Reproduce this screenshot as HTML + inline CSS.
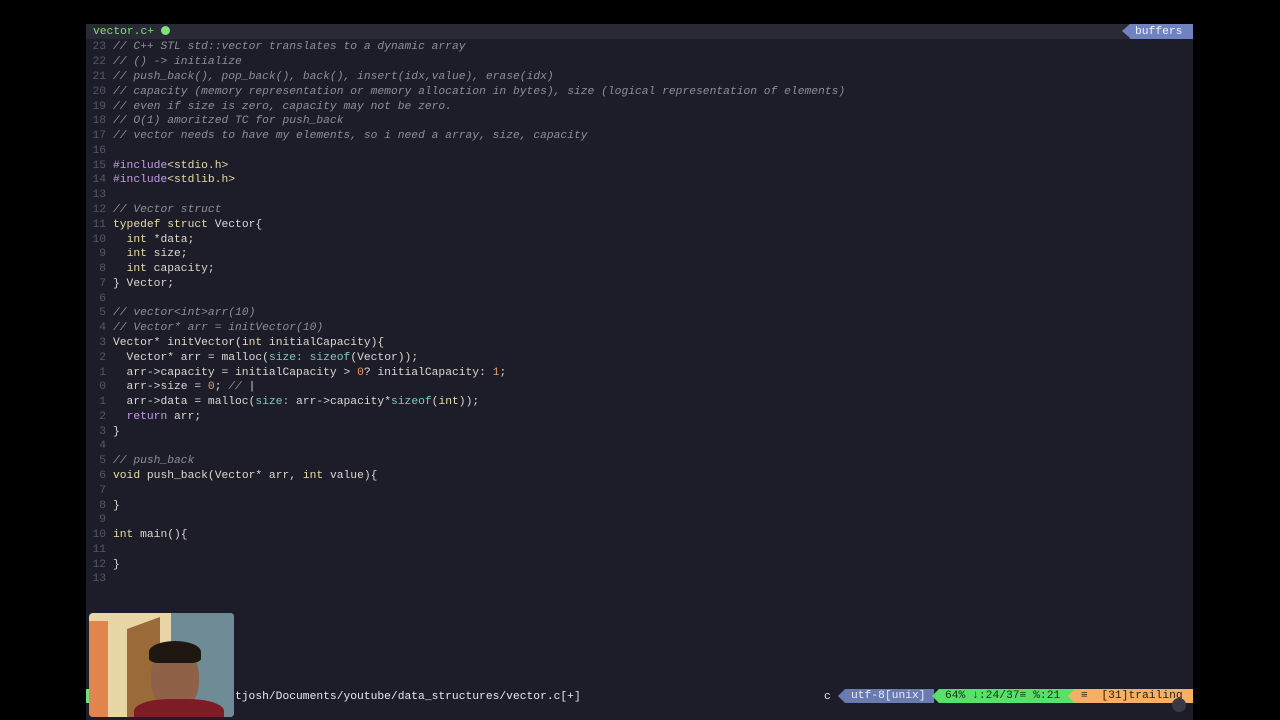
<!DOCTYPE html>
<html><head><meta charset="utf-8"><style>
html,body{margin:0;padding:0;background:#000;width:1280px;height:720px;overflow:hidden}
#ed{position:absolute;left:86px;top:24px;width:1107px;height:696px;background:#1d1d29}
#tab{position:absolute;left:86px;top:24px;width:1107px;height:15px;background:#2a2a37}
.m{font-family:"Liberation Mono",monospace;font-size:11.3px;white-space:pre;position:absolute;line-height:14.78px}
.ln{color:#545868;width:20px;text-align:right;left:86px}
.tx{left:113px;color:#dcd7cf}
.c{color:#8d8d9c;font-style:italic}
.k{color:#e8dba6}
.p{color:#c79be6}
.f{color:#7fc9c0}
.n{color:#e99a6a}
</style></head><body>
<div id="ed"></div>
<div id="tab"></div>
<div class="m" style="left:93px;top:25px;color:#7ee07a;line-height:15px">vector.c+ <span style="display:inline-block;width:9px;height:9px;border-radius:50%;background:#7ee07a;vertical-align:-1px"></span></div>
<div style="position:absolute;left:1122px;top:24px;width:0;height:0;border-top:7.5px solid transparent;border-bottom:7.5px solid transparent;border-right:8px solid #7083c0"></div>
<div class="m" style="left:1130px;top:24px;width:58px;height:15px;line-height:16px;background:#7083c0;color:#f0f0f8;padding-left:5px">buffers</div>
<div id="code"></div>
<div style="position:absolute;left:86px;top:689px;width:4px;height:14px;background:#6fe07a"></div>
<div class="m" style="left:235px;top:690px;line-height:14px;color:#e8e8ee">tjosh/Documents/youtube/data_structures/vector.c[+]</div>
<div class="m" style="left:824px;top:690px;line-height:14px;color:#e8e8ee">c</div>
<div style="position:absolute;left:838px;top:689px;border-top:7px solid transparent;border-bottom:7px solid transparent;border-right:7px solid #6a7bb0"></div>
<div class="m" style="left:845px;top:689px;width:83px;height:14px;line-height:15px;background:#6a7bb0;color:#e8ecf8;padding-left:6px">utf-8[unix]</div>
<div style="position:absolute;left:932px;top:689px;border-top:7px solid transparent;border-bottom:7px solid transparent;border-right:7px solid #58e06a"></div>
<div class="m" style="left:939px;top:689px;width:131px;height:14px;line-height:15px;background:#58e06a;color:#15301a;padding-left:6px">64% ↓:24/37≡ %:21</div>
<div style="position:absolute;left:1068px;top:689px;border-top:7px solid transparent;border-bottom:7px solid transparent;border-right:7px solid #f5b065"></div>
<div class="m" style="left:1075px;top:689px;width:112px;height:14px;line-height:15px;background:#f5b065;color:#2a2010;padding-left:6px">≡  [31]trailing</div>
<div style="position:absolute;left:1172px;top:698px;width:14px;height:14px;border-radius:50%;background:#3a3a44"></div>
<div style="position:absolute;left:89px;top:613px;width:145px;height:104px;border-radius:4px;overflow:hidden;background:#e9d6a6">
 <div style="position:absolute;left:0;top:8px;width:19px;height:96px;background:#e0854e"></div>
 <div style="position:absolute;left:38px;top:10px;width:33px;height:94px;background:#9a6a38;transform:skewY(-20deg)"></div>
 <div style="position:absolute;left:82px;top:0;width:63px;height:104px;background:#6f8c96"></div>
 <div style="position:absolute;left:62px;top:35px;width:48px;height:62px;border-radius:45%;background:#8e6148"></div>
 <div style="position:absolute;left:60px;top:28px;width:52px;height:22px;border-radius:50% 50% 20% 20%;background:#1e1712"></div>
 <div style="position:absolute;left:45px;top:86px;width:90px;height:30px;border-radius:40% 40% 0 0;background:#7e1c26"></div>
</div>
<script>
const L=[
["23",'<span class="c">// C++ STL std::vector translates to a dynamic array</span>'],
["22",'<span class="c">// () -> initialize</span>'],
["21",'<span class="c">// push_back(), pop_back(), back(), insert(idx,value), erase(idx)</span>'],
["20",'<span class="c">// capacity (memory representation or memory allocation in bytes), size (logical representation of elements)</span>'],
["19",'<span class="c">// even if size is zero, capacity may not be zero.</span>'],
["18",'<span class="c">// O(1) amoritzed TC for push_back</span>'],
["17",'<span class="c">// vector needs to have my elements, so i need a array, size, capacity</span>'],
["16",''],
["15",'<span class="p">#include</span><span class="k">&lt;stdio.h&gt;</span>'],
["14",'<span class="p">#include</span><span class="k">&lt;stdlib.h&gt;</span>'],
["13",''],
["12",'<span class="c">// Vector struct</span>'],
["11",'<span class="k">typedef struct</span> Vector{'],
["10",'  <span class="k">int</span> *data;'],
["9",'  <span class="k">int</span> size;'],
["8",'  <span class="k">int</span> capacity;'],
["7",'} Vector;'],
["6",''],
["5",'<span class="c">// vector&lt;int&gt;arr(10)</span>'],
["4",'<span class="c">// Vector* arr = initVector(10)</span>'],
["3",'Vector* initVector(<span class="k">int</span> initialCapacity){'],
["2",'  Vector* arr = malloc(<span class="f">size:</span> <span class="f">sizeof</span>(Vector));'],
["1",'  arr->capacity = initialCapacity &gt; <span class="n">0</span>? initialCapacity: <span class="n">1</span>;'],
["0",'  arr->size = <span class="n">0</span>; <span class="c">// </span>|'],
["1",'  arr->data = malloc(<span class="f">size:</span> arr->capacity*<span class="f">sizeof</span>(<span class="k">int</span>));'],
["2",'  <span class="p">return</span> arr;'],
["3",'}'],
["4",''],
["5",'<span class="c">// push_back</span>'],
["6",'<span class="k">void</span> push_back(Vector* arr, <span class="k">int</span> value){'],
["7",''],
["8",'}'],
["9",''],
["10",'<span class="k">int</span> main(){'],
["11",''],
["12",'}'],
["13",'']];
let h='';
L.forEach((l,i)=>{const t=(40.4+i*14.78).toFixed(2);h+=`<div class="m ln" style="top:${t}px">${l[0]}</div><div class="m tx" style="top:${t}px">${l[1]}</div>`});
document.getElementById('code').innerHTML=h;
</script>
</body></html>
